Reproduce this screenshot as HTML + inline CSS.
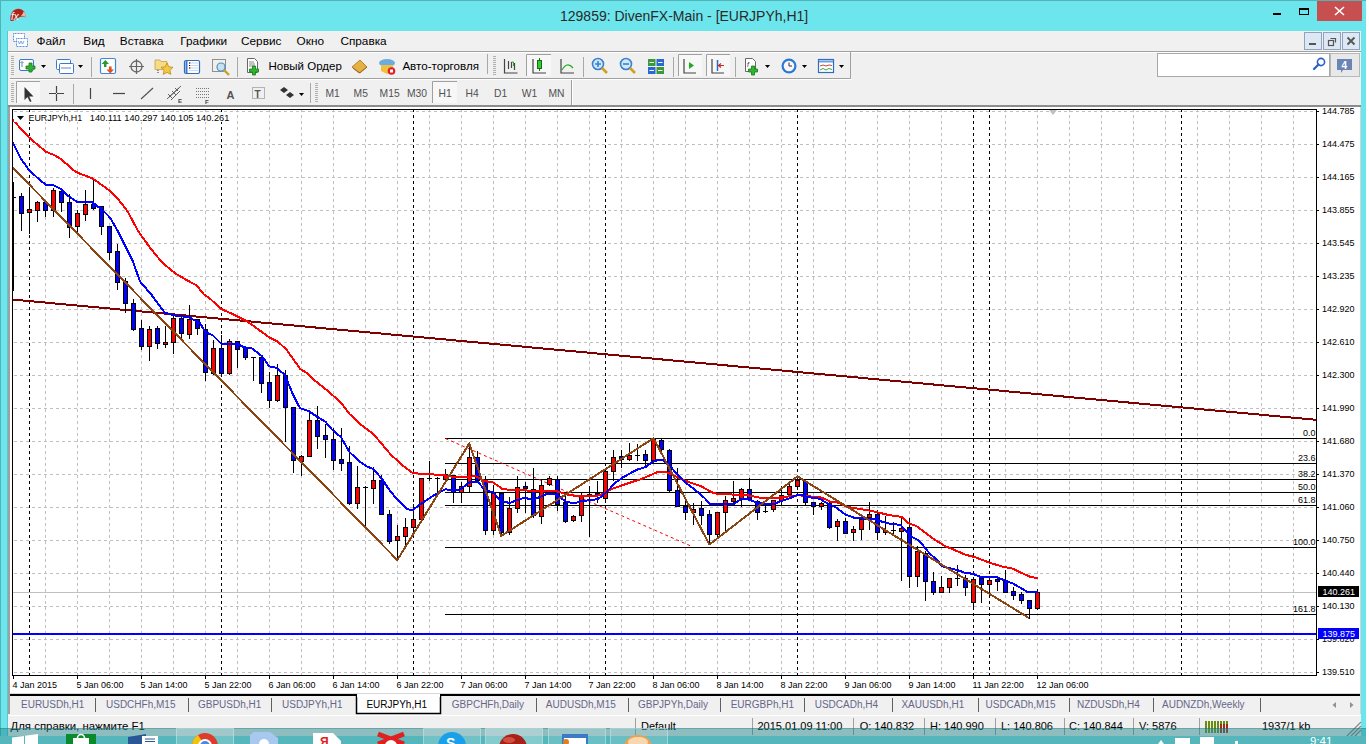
<!DOCTYPE html>
<html><head><meta charset="utf-8"><style>
*{margin:0;padding:0;box-sizing:border-box}
html,body{width:1369px;height:744px;overflow:hidden}
body{background:#6ce6ec;font-family:"Liberation Sans", sans-serif;position:relative}
svg{position:absolute;left:0;top:0}
svg text{font-family:"Liberation Sans", sans-serif}
</style></head><body>
<svg width="1369" height="744">
<rect x="0" y="0" width="1369" height="744" fill="#6ce6ec"/><rect x="1366" y="0" width="3" height="744" fill="#ffffff"/><rect x="0" y="0" width="1366" height="1" fill="#52b2b6"/><rect x="0" y="0" width="1" height="744" fill="#52b2b6"/><path d="M10.5 21C9.8 15 12 9.2 18 8.7C22.8 8.5 25.8 12 25.8 17.8C24 15.8 21 16.2 18.5 17.8C15.5 20 13 21.5 10.5 21Z" fill="#b02418"/><path d="M19 16.8C21.5 15.2 24 15.3 25.8 18C25.9 14.6 25.2 12.5 23.5 11.4C23 14 21.5 15.6 19 16.8Z" fill="#f2b4ac"/><text x="11" y="19.5" font-size="10" font-style="italic" fill="#fff">fx</text><text x="560" y="21" font-size="14" fill="#2a2a2a">129859: DivenFX-Main - [EURJPYh,H1]</text><rect x="1273" y="13" width="8" height="2" fill="#000"/><rect x="1299.5" y="8.5" width="9" height="6" fill="none" stroke="#000" stroke-width="1"/><rect x="1299" y="8" width="10" height="2" fill="#000"/><rect x="1317" y="1" width="45" height="20" fill="#c74f50"/><path d="M1335 7L1344 15M1344 7L1335 15" stroke="#fff" stroke-width="1.6"/><rect x="8" y="31" width="1353" height="705" fill="#f0f0f0"/><rect x="7" y="31" width="1" height="705" fill="#5cc8cc"/><rect x="8" y="51" width="1353" height="1" fill="#a0a0a0"/><rect x="8" y="52" width="1353" height="1" fill="#ffffff"/><rect x="13.5" y="33.5" width="11" height="8" fill="#fff" stroke="#5a8ee0" stroke-dasharray="1 0.5"/><rect x="16.5" y="38.5" width="11" height="8" fill="#fff" stroke="#5a8ee0" stroke-dasharray="1 0.5"/><path d="M18 41L19.5 44L21 41L22.5 44L24 41" stroke="#5a8ee0" fill="none" stroke-width="0.8"/><text x="36.5" y="44.8" font-size="11.8" fill="#000">Файл</text><text x="83.3" y="44.8" font-size="11.8" fill="#000">Вид</text><text x="119.8" y="44.8" font-size="11.8" fill="#000">Вставка</text><text x="180.3" y="44.8" font-size="11.8" fill="#000">Графики</text><text x="241" y="44.8" font-size="11.8" fill="#000">Сервис</text><text x="296.6" y="44.8" font-size="11.8" fill="#000">Окно</text><text x="340.4" y="44.8" font-size="11.8" fill="#000">Справка</text><rect x="1304.5" y="32.5" width="17" height="17" fill="#dde8f4" stroke="#8fa4bc"/><rect x="1323.5" y="32.5" width="17" height="17" fill="#dde8f4" stroke="#8fa4bc"/><rect x="1342.5" y="32.5" width="17" height="17" fill="#dde8f4" stroke="#8fa4bc"/><rect x="1309" y="43" width="7" height="2" fill="#555"/><path d="M1330.5 38.5h5v4" stroke="#555" fill="none" stroke-width="1.2"/><rect x="1328.5" y="40.5" width="5" height="5" fill="none" stroke="#555" stroke-width="1.2"/><path d="M1347.5 37.5L1354.5 44.5M1354.5 37.5L1347.5 44.5" stroke="#555" stroke-width="1.8"/><rect x="1157.5" y="53.5" width="172" height="23" fill="#fff" stroke="#a8a8a8"/><circle cx="1321" cy="62" r="3.6" fill="none" stroke="#2a5fc8" stroke-width="1.6"/><path d="M1318.5 64.5L1314 69" stroke="#2a5fc8" stroke-width="2.2" stroke-linecap="round"/><rect x="1330.5" y="53.5" width="29" height="23" fill="#e8e8e8" stroke="#b8b8b8"/><path d="M1337 59h15v11h-9l-2 3v-3h-4z" fill="#6a84b6"/><text x="1341.5" y="68.5" font-size="10" font-weight="bold" fill="#fff">4</text><path d="M10 78.5H850.5V52" stroke="#a0a0a0" fill="none"/><path d="M10 79.5H851.5" stroke="#fff" fill="none"/><path d="M571.5 80V105" stroke="#a0a0a0" fill="none"/><path d="M572.5 80V105" stroke="#fff" fill="none"/><rect x="8" y="105" width="1353" height="2" fill="#8c8c8c"/><path d="M11 56.5h3M11 58.5h3M11 60.5h3M11 62.5h3M11 64.5h3M11 66.5h3M11 68.5h3M11 70.5h3M11 72.5h3M11 74.5h3" stroke="#b0b0b0" stroke-width="1"/><path d="M11 83.5h3M11 85.5h3M11 87.5h3M11 89.5h3M11 91.5h3M11 93.5h3M11 95.5h3M11 97.5h3M11 99.5h3M11 101.5h3" stroke="#b0b0b0" stroke-width="1"/><path d="M493 56.5h3M493 58.5h3M493 60.5h3M493 62.5h3M493 64.5h3M493 66.5h3M493 68.5h3M493 70.5h3M493 72.5h3M493 74.5h3" stroke="#b0b0b0" stroke-width="1"/><path d="M315 83.5h3M315 85.5h3M315 87.5h3M315 89.5h3M315 91.5h3M315 93.5h3M315 95.5h3M315 97.5h3M315 99.5h3M315 101.5h3" stroke="#b0b0b0" stroke-width="1"/><path d="M91.5 57V77" stroke="#a8a8a8" stroke-width="1"/><path d="M237.5 57V77" stroke="#a8a8a8" stroke-width="1"/><path d="M487.5 54V74" stroke="#a8a8a8" stroke-width="1"/><path d="M583.5 57V77" stroke="#a8a8a8" stroke-width="1"/><path d="M673.5 57V77" stroke="#a8a8a8" stroke-width="1"/><path d="M735.5 57V77" stroke="#a8a8a8" stroke-width="1"/><path d="M73.5 84V104" stroke="#a8a8a8" stroke-width="1"/><path d="M310.5 83V103" stroke="#a8a8a8" stroke-width="1"/><rect x="16" y="81" width="24" height="22" fill="#f7f7f7"/><path d="M16.5 103V81.5H40" stroke="#a0a0a0" fill="none"/><rect x="432" y="81" width="25" height="22" fill="#f7f7f7"/><path d="M432.5 103V81.5H457" stroke="#a0a0a0" fill="none"/><rect x="526" y="54" width="25" height="22" fill="#f7f7f7"/><path d="M526.5 76V54.5H551" stroke="#a0a0a0" fill="none"/><rect x="678" y="54" width="24" height="22" fill="#f7f7f7"/><path d="M678.5 76V54.5H702" stroke="#a0a0a0" fill="none"/><rect x="706" y="54" width="24" height="22" fill="#f7f7f7"/><path d="M706.5 76V54.5H730" stroke="#a0a0a0" fill="none"/><rect x="10" y="107" width="1350" height="587" fill="#fff"/><path d="M14 111.5H1316M14 144.5H1316M14 177.5H1316M14 210.5H1316M14 243.5H1316M14 276.5H1316M14 309.5H1316M14 342.5H1316M14 375.5H1316M14 408.5H1316M14 441.5H1316M14 474.5H1316M14 507.5H1316M14 540.5H1316M14 573.5H1316M14 606.5H1316M14 639.5H1316M14 672.5H1316" stroke="#c0c0c0" stroke-width="1" stroke-dasharray="3 3" fill="none"/><path d="M45.5 109V675M77.5 109V675M109.5 109V675M141.5 109V675M173.5 109V675M205.5 109V675M237.5 109V675M269.5 109V675M301.5 109V675M333.5 109V675M365.5 109V675M397.5 109V675M429.5 109V675M461.5 109V675M493.5 109V675M525.5 109V675M557.5 109V675M589.5 109V675M621.5 109V675M653.5 109V675M685.5 109V675M717.5 109V675M749.5 109V675M781.5 109V675M813.5 109V675M845.5 109V675M877.5 109V675M909.5 109V675M941.5 109V675M973.5 109V675M1005.5 109V675M1037.5 109V675M1069.5 109V675M1101.5 109V675M1133.5 109V675M1165.5 109V675M1197.5 109V675M1229.5 109V675M1261.5 109V675M1293.5 109V675" stroke="#c0c0c0" stroke-width="1" stroke-dasharray="3 3" fill="none"/><path d="M29.5 109V675M221.5 109V675M413.5 109V675M605.5 109V675M797.5 109V675M973.5 109V675M989.5 109V675M1181.5 109V675" stroke="#000" stroke-width="1" stroke-dasharray="3 3" fill="none"/><line x1="12" y1="299.5" x2="1316" y2="419.8" stroke="#800000" stroke-width="2" shape-rendering="crispEdges"/><path d="M445 438.5H1316M445 463.5H1316M445 479.5H1316M445 492.5H1316M445 505.5H1316M445 547.5H1316M445 614.5H1316" stroke="#000" stroke-width="1" fill="none"/><line x1="445.5" y1="438.5" x2="692" y2="546.5" stroke="#ff0000" stroke-width="1" stroke-dasharray="3 3"/><path d="M13 592.5H1316" stroke="#c0c0c0" stroke-width="1"/><rect x="12" y="633" width="1304" height="2" fill="#0000ff"/><rect x="13" y="182" width="1" height="109" fill="#000"/><rect x="13" y="197" width="3" height="1" fill="#000"/><rect x="21" y="193" width="1" height="38" fill="#000"/><rect x="19" y="196" width="5" height="18" fill="#000"/><rect x="20" y="197" width="3" height="16" fill="#0000ff"/><rect x="29" y="188" width="1" height="46" fill="#000"/><rect x="27" y="209" width="5" height="4" fill="#000"/><rect x="28" y="210" width="3" height="2" fill="#ff0000"/><rect x="37" y="201" width="1" height="21" fill="#000"/><rect x="35" y="202" width="5" height="9" fill="#000"/><rect x="36" y="203" width="3" height="7" fill="#ff0000"/><rect x="45" y="200" width="1" height="17" fill="#000"/><rect x="43" y="202" width="5" height="9" fill="#000"/><rect x="44" y="203" width="3" height="7" fill="#0000ff"/><rect x="53" y="188" width="1" height="29" fill="#000"/><rect x="51" y="190" width="5" height="21" fill="#000"/><rect x="52" y="191" width="3" height="19" fill="#ff0000"/><rect x="61" y="190" width="1" height="22" fill="#000"/><rect x="59" y="191" width="5" height="12" fill="#000"/><rect x="60" y="192" width="3" height="10" fill="#0000ff"/><rect x="69" y="194" width="1" height="44" fill="#000"/><rect x="67" y="202" width="5" height="26" fill="#000"/><rect x="68" y="203" width="3" height="24" fill="#0000ff"/><rect x="77" y="210" width="1" height="24" fill="#000"/><rect x="75" y="213" width="5" height="14" fill="#000"/><rect x="76" y="214" width="3" height="12" fill="#ff0000"/><rect x="85" y="190" width="1" height="31" fill="#000"/><rect x="83" y="204" width="5" height="11" fill="#000"/><rect x="84" y="205" width="3" height="9" fill="#ff0000"/><rect x="93" y="180" width="1" height="30" fill="#000"/><rect x="91" y="204" width="5" height="5" fill="#000"/><rect x="92" y="205" width="3" height="3" fill="#0000ff"/><rect x="101" y="206" width="1" height="29" fill="#000"/><rect x="99" y="206" width="5" height="21" fill="#000"/><rect x="100" y="207" width="3" height="19" fill="#0000ff"/><rect x="109" y="226" width="1" height="34" fill="#000"/><rect x="107" y="226" width="5" height="27" fill="#000"/><rect x="108" y="227" width="3" height="25" fill="#0000ff"/><rect x="117" y="244" width="1" height="46" fill="#000"/><rect x="115" y="251" width="5" height="32" fill="#000"/><rect x="116" y="252" width="3" height="30" fill="#0000ff"/><rect x="125" y="278" width="1" height="35" fill="#000"/><rect x="123" y="281" width="5" height="23" fill="#000"/><rect x="124" y="282" width="3" height="21" fill="#0000ff"/><rect x="133" y="299" width="1" height="32" fill="#000"/><rect x="131" y="303" width="5" height="27" fill="#000"/><rect x="132" y="304" width="3" height="25" fill="#0000ff"/><rect x="141" y="320" width="1" height="30" fill="#000"/><rect x="139" y="328" width="5" height="19" fill="#000"/><rect x="140" y="329" width="3" height="17" fill="#0000ff"/><rect x="149" y="326" width="1" height="35" fill="#000"/><rect x="147" y="329" width="5" height="18" fill="#000"/><rect x="148" y="330" width="3" height="16" fill="#ff0000"/><rect x="157" y="326" width="1" height="23" fill="#000"/><rect x="155" y="328" width="5" height="16" fill="#000"/><rect x="156" y="329" width="3" height="14" fill="#0000ff"/><rect x="165" y="326" width="1" height="22" fill="#000"/><rect x="163" y="342" width="5" height="3" fill="#000"/><rect x="164" y="343" width="3" height="1" fill="#ff0000"/><rect x="173" y="316" width="1" height="38" fill="#000"/><rect x="171" y="318" width="5" height="25" fill="#000"/><rect x="172" y="319" width="3" height="23" fill="#ff0000"/><rect x="181" y="316" width="1" height="23" fill="#000"/><rect x="179" y="318" width="5" height="16" fill="#000"/><rect x="180" y="319" width="3" height="14" fill="#0000ff"/><rect x="189" y="305" width="1" height="34" fill="#000"/><rect x="187" y="319" width="5" height="16" fill="#000"/><rect x="188" y="320" width="3" height="14" fill="#ff0000"/><rect x="197" y="319" width="1" height="16" fill="#000"/><rect x="195" y="319" width="5" height="10" fill="#000"/><rect x="196" y="320" width="3" height="8" fill="#0000ff"/><rect x="205" y="324" width="1" height="57" fill="#000"/><rect x="203" y="329" width="5" height="44" fill="#000"/><rect x="204" y="330" width="3" height="42" fill="#0000ff"/><rect x="213" y="340" width="1" height="35" fill="#000"/><rect x="211" y="348" width="5" height="26" fill="#000"/><rect x="212" y="349" width="3" height="24" fill="#ff0000"/><rect x="221" y="335" width="1" height="42" fill="#000"/><rect x="219" y="348" width="5" height="26" fill="#000"/><rect x="220" y="349" width="3" height="24" fill="#0000ff"/><rect x="229" y="339" width="1" height="36" fill="#000"/><rect x="227" y="341" width="5" height="33" fill="#000"/><rect x="228" y="342" width="3" height="31" fill="#ff0000"/><rect x="237" y="341" width="1" height="27" fill="#000"/><rect x="235" y="341" width="5" height="9" fill="#000"/><rect x="236" y="342" width="3" height="7" fill="#0000ff"/><rect x="245" y="347" width="1" height="13" fill="#000"/><rect x="243" y="347" width="5" height="11" fill="#000"/><rect x="244" y="348" width="3" height="9" fill="#0000ff"/><rect x="253" y="357" width="1" height="24" fill="#000"/><rect x="251" y="357" width="5" height="1" fill="#000"/><rect x="261" y="357" width="1" height="36" fill="#000"/><rect x="259" y="357" width="5" height="27" fill="#000"/><rect x="260" y="358" width="3" height="25" fill="#0000ff"/><rect x="269" y="372" width="1" height="36" fill="#000"/><rect x="267" y="382" width="5" height="19" fill="#000"/><rect x="268" y="383" width="3" height="17" fill="#0000ff"/><rect x="277" y="364" width="1" height="38" fill="#000"/><rect x="275" y="375" width="5" height="26" fill="#000"/><rect x="276" y="376" width="3" height="24" fill="#ff0000"/><rect x="285" y="370" width="1" height="72" fill="#000"/><rect x="283" y="375" width="5" height="33" fill="#000"/><rect x="284" y="376" width="3" height="31" fill="#0000ff"/><rect x="293" y="407" width="1" height="66" fill="#000"/><rect x="291" y="407" width="5" height="54" fill="#000"/><rect x="292" y="408" width="3" height="52" fill="#0000ff"/><rect x="301" y="455" width="1" height="21" fill="#000"/><rect x="299" y="456" width="5" height="6" fill="#000"/><rect x="300" y="457" width="3" height="4" fill="#ff0000"/><rect x="309" y="411" width="1" height="46" fill="#000"/><rect x="307" y="420" width="5" height="37" fill="#000"/><rect x="308" y="421" width="3" height="35" fill="#ff0000"/><rect x="317" y="406" width="1" height="43" fill="#000"/><rect x="315" y="420" width="5" height="17" fill="#000"/><rect x="316" y="421" width="3" height="15" fill="#0000ff"/><rect x="325" y="424" width="1" height="34" fill="#000"/><rect x="323" y="435" width="5" height="5" fill="#000"/><rect x="324" y="436" width="3" height="3" fill="#0000ff"/><rect x="333" y="428" width="1" height="42" fill="#000"/><rect x="331" y="439" width="5" height="22" fill="#000"/><rect x="332" y="440" width="3" height="20" fill="#0000ff"/><rect x="341" y="428" width="1" height="43" fill="#000"/><rect x="339" y="459" width="5" height="5" fill="#000"/><rect x="340" y="460" width="3" height="3" fill="#0000ff"/><rect x="349" y="446" width="1" height="59" fill="#000"/><rect x="347" y="462" width="5" height="42" fill="#000"/><rect x="348" y="463" width="3" height="40" fill="#0000ff"/><rect x="357" y="466" width="1" height="43" fill="#000"/><rect x="355" y="487" width="5" height="17" fill="#000"/><rect x="356" y="488" width="3" height="15" fill="#ff0000"/><rect x="365" y="486" width="1" height="41" fill="#000"/><rect x="363" y="487" width="5" height="1" fill="#000"/><rect x="373" y="467" width="1" height="37" fill="#000"/><rect x="371" y="480" width="5" height="9" fill="#000"/><rect x="372" y="481" width="3" height="7" fill="#ff0000"/><rect x="381" y="475" width="1" height="40" fill="#000"/><rect x="379" y="480" width="5" height="35" fill="#000"/><rect x="380" y="481" width="3" height="33" fill="#0000ff"/><rect x="389" y="510" width="1" height="34" fill="#000"/><rect x="387" y="514" width="5" height="28" fill="#000"/><rect x="388" y="515" width="3" height="26" fill="#0000ff"/><rect x="397" y="525" width="1" height="36" fill="#000"/><rect x="395" y="536" width="5" height="5" fill="#000"/><rect x="396" y="537" width="3" height="3" fill="#ff0000"/><rect x="405" y="518" width="1" height="28" fill="#000"/><rect x="403" y="527" width="5" height="10" fill="#000"/><rect x="404" y="528" width="3" height="8" fill="#ff0000"/><rect x="413" y="504" width="1" height="28" fill="#000"/><rect x="411" y="519" width="5" height="9" fill="#000"/><rect x="412" y="520" width="3" height="7" fill="#ff0000"/><rect x="421" y="478" width="1" height="42" fill="#000"/><rect x="419" y="478" width="5" height="42" fill="#000"/><rect x="420" y="479" width="3" height="40" fill="#ff0000"/><rect x="429" y="461" width="1" height="20" fill="#000"/><rect x="427" y="478" width="5" height="1" fill="#000"/><rect x="437" y="477" width="1" height="17" fill="#000"/><rect x="435" y="478" width="5" height="1" fill="#000"/><rect x="445" y="469" width="1" height="11" fill="#000"/><rect x="443" y="474" width="5" height="6" fill="#000"/><rect x="444" y="475" width="3" height="4" fill="#ff0000"/><rect x="453" y="475" width="1" height="28" fill="#000"/><rect x="451" y="475" width="5" height="18" fill="#000"/><rect x="452" y="476" width="3" height="16" fill="#0000ff"/><rect x="461" y="482" width="1" height="21" fill="#000"/><rect x="459" y="486" width="5" height="7" fill="#000"/><rect x="460" y="487" width="3" height="5" fill="#ff0000"/><rect x="469" y="445" width="1" height="48" fill="#000"/><rect x="467" y="457" width="5" height="30" fill="#000"/><rect x="468" y="458" width="3" height="28" fill="#ff0000"/><rect x="477" y="451" width="1" height="30" fill="#000"/><rect x="475" y="457" width="5" height="24" fill="#000"/><rect x="476" y="458" width="3" height="22" fill="#0000ff"/><rect x="485" y="476" width="1" height="59" fill="#000"/><rect x="483" y="480" width="5" height="51" fill="#000"/><rect x="484" y="481" width="3" height="49" fill="#0000ff"/><rect x="493" y="485" width="1" height="50" fill="#000"/><rect x="491" y="493" width="5" height="38" fill="#000"/><rect x="492" y="494" width="3" height="36" fill="#ff0000"/><rect x="501" y="493" width="1" height="41" fill="#000"/><rect x="499" y="493" width="5" height="40" fill="#000"/><rect x="500" y="494" width="3" height="38" fill="#0000ff"/><rect x="509" y="497" width="1" height="38" fill="#000"/><rect x="507" y="508" width="5" height="25" fill="#000"/><rect x="508" y="509" width="3" height="23" fill="#ff0000"/><rect x="517" y="476" width="1" height="37" fill="#000"/><rect x="515" y="487" width="5" height="22" fill="#000"/><rect x="516" y="488" width="3" height="20" fill="#ff0000"/><rect x="525" y="482" width="1" height="31" fill="#000"/><rect x="523" y="486" width="5" height="3" fill="#000"/><rect x="524" y="487" width="3" height="1" fill="#0000ff"/><rect x="533" y="468" width="1" height="50" fill="#000"/><rect x="531" y="489" width="5" height="27" fill="#000"/><rect x="532" y="490" width="3" height="25" fill="#0000ff"/><rect x="541" y="479" width="1" height="45" fill="#000"/><rect x="539" y="485" width="5" height="32" fill="#000"/><rect x="540" y="486" width="3" height="30" fill="#ff0000"/><rect x="549" y="476" width="1" height="10" fill="#000"/><rect x="547" y="478" width="5" height="7" fill="#000"/><rect x="548" y="479" width="3" height="5" fill="#ff0000"/><rect x="557" y="476" width="1" height="35" fill="#000"/><rect x="555" y="479" width="5" height="26" fill="#000"/><rect x="556" y="480" width="3" height="24" fill="#0000ff"/><rect x="565" y="495" width="1" height="28" fill="#000"/><rect x="563" y="502" width="5" height="20" fill="#000"/><rect x="564" y="503" width="3" height="18" fill="#0000ff"/><rect x="573" y="515" width="1" height="7" fill="#000"/><rect x="571" y="516" width="5" height="5" fill="#000"/><rect x="572" y="517" width="3" height="3" fill="#ff0000"/><rect x="581" y="493" width="1" height="29" fill="#000"/><rect x="579" y="495" width="5" height="21" fill="#000"/><rect x="580" y="496" width="3" height="19" fill="#ff0000"/><rect x="589" y="486" width="1" height="51" fill="#000"/><rect x="587" y="494" width="5" height="1" fill="#000"/><rect x="597" y="481" width="1" height="22" fill="#000"/><rect x="595" y="493" width="5" height="3" fill="#000"/><rect x="596" y="494" width="3" height="1" fill="#0000ff"/><rect x="605" y="471" width="1" height="32" fill="#000"/><rect x="603" y="471" width="5" height="28" fill="#000"/><rect x="604" y="472" width="3" height="26" fill="#ff0000"/><rect x="613" y="450" width="1" height="31" fill="#000"/><rect x="611" y="457" width="5" height="15" fill="#000"/><rect x="612" y="458" width="3" height="13" fill="#ff0000"/><rect x="621" y="450" width="1" height="18" fill="#000"/><rect x="619" y="456" width="5" height="4" fill="#000"/><rect x="620" y="457" width="3" height="2" fill="#0000ff"/><rect x="629" y="443" width="1" height="18" fill="#000"/><rect x="627" y="455" width="5" height="5" fill="#000"/><rect x="628" y="456" width="3" height="3" fill="#ff0000"/><rect x="637" y="444" width="1" height="17" fill="#000"/><rect x="635" y="455" width="5" height="1" fill="#000"/><rect x="645" y="450" width="1" height="16" fill="#000"/><rect x="643" y="454" width="5" height="7" fill="#000"/><rect x="644" y="455" width="3" height="5" fill="#0000ff"/><rect x="653" y="437" width="1" height="24" fill="#000"/><rect x="651" y="438" width="5" height="23" fill="#000"/><rect x="652" y="439" width="3" height="21" fill="#ff0000"/><rect x="661" y="439" width="1" height="12" fill="#000"/><rect x="659" y="440" width="5" height="10" fill="#000"/><rect x="660" y="441" width="3" height="8" fill="#0000ff"/><rect x="669" y="449" width="1" height="44" fill="#000"/><rect x="667" y="450" width="5" height="41" fill="#000"/><rect x="668" y="451" width="3" height="39" fill="#0000ff"/><rect x="677" y="468" width="1" height="39" fill="#000"/><rect x="675" y="490" width="5" height="17" fill="#000"/><rect x="676" y="491" width="3" height="15" fill="#0000ff"/><rect x="685" y="501" width="1" height="19" fill="#000"/><rect x="683" y="506" width="5" height="7" fill="#000"/><rect x="684" y="507" width="3" height="5" fill="#0000ff"/><rect x="693" y="503" width="1" height="22" fill="#000"/><rect x="691" y="509" width="5" height="4" fill="#000"/><rect x="692" y="510" width="3" height="2" fill="#ff0000"/><rect x="701" y="501" width="1" height="24" fill="#000"/><rect x="699" y="508" width="5" height="8" fill="#000"/><rect x="700" y="509" width="3" height="6" fill="#0000ff"/><rect x="709" y="510" width="1" height="35" fill="#000"/><rect x="707" y="514" width="5" height="21" fill="#000"/><rect x="708" y="515" width="3" height="19" fill="#0000ff"/><rect x="717" y="512" width="1" height="27" fill="#000"/><rect x="715" y="512" width="5" height="23" fill="#000"/><rect x="716" y="513" width="3" height="21" fill="#ff0000"/><rect x="725" y="496" width="1" height="36" fill="#000"/><rect x="723" y="500" width="5" height="13" fill="#000"/><rect x="724" y="501" width="3" height="11" fill="#ff0000"/><rect x="733" y="481" width="1" height="23" fill="#000"/><rect x="731" y="498" width="5" height="4" fill="#000"/><rect x="732" y="499" width="3" height="2" fill="#ff0000"/><rect x="741" y="488" width="1" height="19" fill="#000"/><rect x="739" y="489" width="5" height="10" fill="#000"/><rect x="740" y="490" width="3" height="8" fill="#ff0000"/><rect x="749" y="478" width="1" height="23" fill="#000"/><rect x="747" y="489" width="5" height="11" fill="#000"/><rect x="748" y="490" width="3" height="9" fill="#0000ff"/><rect x="757" y="500" width="1" height="20" fill="#000"/><rect x="755" y="501" width="5" height="12" fill="#000"/><rect x="756" y="502" width="3" height="10" fill="#0000ff"/><rect x="765" y="503" width="1" height="10" fill="#000"/><rect x="763" y="511" width="5" height="1" fill="#000"/><rect x="773" y="500" width="1" height="12" fill="#000"/><rect x="771" y="500" width="5" height="10" fill="#000"/><rect x="772" y="501" width="3" height="8" fill="#ff0000"/><rect x="781" y="486" width="1" height="20" fill="#000"/><rect x="779" y="495" width="5" height="6" fill="#000"/><rect x="780" y="496" width="3" height="4" fill="#ff0000"/><rect x="789" y="482" width="1" height="14" fill="#000"/><rect x="787" y="486" width="5" height="9" fill="#000"/><rect x="788" y="487" width="3" height="7" fill="#ff0000"/><rect x="797" y="476" width="1" height="13" fill="#000"/><rect x="795" y="480" width="5" height="7" fill="#000"/><rect x="796" y="481" width="3" height="5" fill="#ff0000"/><rect x="805" y="480" width="1" height="26" fill="#000"/><rect x="803" y="481" width="5" height="22" fill="#000"/><rect x="804" y="482" width="3" height="20" fill="#0000ff"/><rect x="813" y="502" width="1" height="13" fill="#000"/><rect x="811" y="502" width="5" height="5" fill="#000"/><rect x="812" y="503" width="3" height="3" fill="#0000ff"/><rect x="821" y="502" width="1" height="8" fill="#000"/><rect x="819" y="503" width="5" height="4" fill="#000"/><rect x="820" y="504" width="3" height="2" fill="#ff0000"/><rect x="829" y="502" width="1" height="27" fill="#000"/><rect x="827" y="503" width="5" height="25" fill="#000"/><rect x="828" y="504" width="3" height="23" fill="#0000ff"/><rect x="837" y="519" width="1" height="22" fill="#000"/><rect x="835" y="521" width="5" height="6" fill="#000"/><rect x="836" y="522" width="3" height="4" fill="#ff0000"/><rect x="845" y="518" width="1" height="16" fill="#000"/><rect x="843" y="521" width="5" height="13" fill="#000"/><rect x="844" y="522" width="3" height="11" fill="#0000ff"/><rect x="853" y="526" width="1" height="15" fill="#000"/><rect x="851" y="529" width="5" height="4" fill="#000"/><rect x="852" y="530" width="3" height="2" fill="#ff0000"/><rect x="861" y="517" width="1" height="23" fill="#000"/><rect x="859" y="519" width="5" height="11" fill="#000"/><rect x="860" y="520" width="3" height="9" fill="#ff0000"/><rect x="869" y="502" width="1" height="28" fill="#000"/><rect x="867" y="514" width="5" height="4" fill="#000"/><rect x="868" y="515" width="3" height="2" fill="#ff0000"/><rect x="877" y="510" width="1" height="30" fill="#000"/><rect x="875" y="514" width="5" height="19" fill="#000"/><rect x="876" y="515" width="3" height="17" fill="#0000ff"/><rect x="885" y="516" width="1" height="19" fill="#000"/><rect x="883" y="530" width="5" height="3" fill="#000"/><rect x="884" y="531" width="3" height="1" fill="#ff0000"/><rect x="893" y="522" width="1" height="13" fill="#000"/><rect x="891" y="530" width="5" height="1" fill="#000"/><rect x="901" y="518" width="1" height="63" fill="#000"/><rect x="899" y="528" width="5" height="4" fill="#000"/><rect x="900" y="529" width="3" height="2" fill="#ff0000"/><rect x="909" y="518" width="1" height="70" fill="#000"/><rect x="907" y="527" width="5" height="50" fill="#000"/><rect x="908" y="528" width="3" height="48" fill="#0000ff"/><rect x="917" y="546" width="1" height="41" fill="#000"/><rect x="915" y="551" width="5" height="26" fill="#000"/><rect x="916" y="552" width="3" height="24" fill="#ff0000"/><rect x="925" y="551" width="1" height="50" fill="#000"/><rect x="923" y="553" width="5" height="29" fill="#000"/><rect x="924" y="554" width="3" height="27" fill="#0000ff"/><rect x="933" y="572" width="1" height="23" fill="#000"/><rect x="931" y="581" width="5" height="12" fill="#000"/><rect x="932" y="582" width="3" height="10" fill="#0000ff"/><rect x="941" y="576" width="1" height="17" fill="#000"/><rect x="939" y="587" width="5" height="6" fill="#000"/><rect x="940" y="588" width="3" height="4" fill="#ff0000"/><rect x="949" y="578" width="1" height="15" fill="#000"/><rect x="947" y="578" width="5" height="10" fill="#000"/><rect x="948" y="579" width="3" height="8" fill="#ff0000"/><rect x="957" y="565" width="1" height="21" fill="#000"/><rect x="955" y="578" width="5" height="1" fill="#000"/><rect x="965" y="575" width="1" height="21" fill="#000"/><rect x="963" y="578" width="5" height="10" fill="#000"/><rect x="964" y="579" width="3" height="8" fill="#0000ff"/><rect x="973" y="578" width="1" height="32" fill="#000"/><rect x="971" y="579" width="5" height="24" fill="#000"/><rect x="972" y="580" width="3" height="22" fill="#ff0000"/><rect x="981" y="578" width="1" height="25" fill="#000"/><rect x="979" y="578" width="5" height="7" fill="#000"/><rect x="980" y="579" width="3" height="5" fill="#0000ff"/><rect x="989" y="578" width="1" height="17" fill="#000"/><rect x="987" y="580" width="5" height="5" fill="#000"/><rect x="988" y="581" width="3" height="3" fill="#ff0000"/><rect x="997" y="578" width="1" height="13" fill="#000"/><rect x="995" y="579" width="5" height="3" fill="#000"/><rect x="996" y="580" width="3" height="1" fill="#0000ff"/><rect x="1005" y="570" width="1" height="23" fill="#000"/><rect x="1003" y="581" width="5" height="12" fill="#000"/><rect x="1004" y="582" width="3" height="10" fill="#0000ff"/><rect x="1013" y="587" width="1" height="13" fill="#000"/><rect x="1011" y="591" width="5" height="5" fill="#000"/><rect x="1012" y="592" width="3" height="3" fill="#0000ff"/><rect x="1021" y="592" width="1" height="12" fill="#000"/><rect x="1019" y="594" width="5" height="7" fill="#000"/><rect x="1020" y="595" width="3" height="5" fill="#0000ff"/><rect x="1029" y="600" width="1" height="19" fill="#000"/><rect x="1027" y="600" width="5" height="9" fill="#000"/><rect x="1028" y="601" width="3" height="7" fill="#0000ff"/><rect x="1037" y="589" width="1" height="21" fill="#000"/><rect x="1035" y="592" width="5" height="17" fill="#000"/><rect x="1036" y="593" width="3" height="15" fill="#ff0000"/><polyline points="12.5,119.5 29.0,137.5 45.9,151.7 54.4,155.2 61.4,159.4 74.1,170.7 79.8,173.6 92.5,178.5 99.6,183.4 109.5,190.5 118.0,199.0 127.8,211.7 137.5,230.0 141.3,235.6 148.8,246.0 155.4,254.5 162.0,262.0 167.6,267.1 175.2,273.3 184.6,278.9 191.2,282.6 196.8,285.5 203.4,294.0 209.0,297.7 221.2,309.0 231.0,313.3 246.6,321.0 256.5,328.1 269.2,337.3 277.7,341.6 286.2,349.3 300.3,369.0 307.3,373.3 314.1,380.0 328.2,391.3 341.0,402.6 349.4,413.9 360.7,424.5 372.0,433.0 379.1,440.7 390.4,454.2 401.7,464.7 413.0,473.2 429.4,474.2 445.0,475.3 453.4,477.0 464.7,476.7 476.0,476.4 484.5,481.0 493.0,482.4 502.3,488.9 510.3,490.0 526.5,490.5 542.6,491.0 557.0,491.3 566.8,494.5 574.8,495.8 595.8,496.1 603.9,493.7 609.1,490.0 617.1,487.1 628.6,483.1 641.1,479.1 649.1,475.7 658.3,471.7 665.1,471.7 670.9,474.0 680.0,478.6 690.3,482.6 700.6,486.0 709.7,491.1 714.3,493.4 724.9,494.1 738.6,494.9 750.0,495.6 761.4,498.1 774.0,498.1 784.3,497.0 792.3,495.9 799.1,495.3 809.4,496.4 819.7,497.0 825.4,499.3 830.0,501.6 836.4,502.0 847.9,507.1 859.3,508.9 869.6,510.6 879.9,512.9 889.0,515.1 901.6,516.9 908.4,523.1 916.4,526.0 925.6,532.9 934.7,539.7 945.0,546.0 949.9,548.0 965.9,554.9 975.0,557.1 989.9,562.9 1003.6,566.9 1012.7,568.6 1020.7,572.6 1029.9,576.6 1037.9,578.3" stroke="#ff0000" stroke-width="2" fill="none" stroke-linejoin="round" shape-rendering="crispEdges"/><polyline points="12.5,142.0 20.5,158.0 29.0,170.0 37.4,177.8 45.9,184.9 53.0,184.9 61.4,189.1 68.5,196.2 77.0,201.8 92.5,202.5 102.5,210.0 110.0,217.6 117.6,230.7 125.1,245.8 132.6,260.8 140.1,281.5 151.4,294.7 164.6,312.5 174.0,315.4 189.0,317.2 200.0,323.2 205.6,332.4 212.7,335.2 221.2,343.7 236.7,343.7 243.8,347.2 252.3,348.6 262.1,356.4 269.2,366.3 276.3,367.7 284.7,374.7 293.2,395.0 300.0,408.2 308.5,411.0 317.0,416.7 325.4,421.7 332.5,430.1 341.0,437.2 349.4,452.0 359.3,461.2 366.4,466.2 373.4,469.0 381.9,478.9 388.5,488.7 397.0,499.3 406.8,509.2 412.5,510.0 422.4,502.9 436.5,493.7 445.0,489.4 459.1,490.1 470.4,481.7 477.5,481.7 485.9,490.8 493.0,492.0 500.0,500.7 509.4,503.0 516.9,500.3 524.4,497.6 532.0,499.8 538.4,497.6 547.0,493.9 554.5,494.2 559.9,497.1 565.3,501.4 573.9,503.5 581.4,500.9 590.0,500.3 597.5,499.2 602.9,495.5 610.0,488.5 614.9,483.1 622.9,477.4 630.9,472.9 637.7,469.4 645.7,467.1 651.4,462.6 657.1,460.3 662.9,460.3 668.6,464.3 675.4,472.3 683.4,480.9 691.4,487.1 699.4,493.4 705.1,498.6 709.7,503.7 732.9,504.4 740.9,499.3 747.7,499.3 755.7,502.1 764.9,503.9 774.0,503.9 783.1,500.4 790.0,498.1 796.9,495.0 801.4,495.0 807.1,497.0 819.7,498.7 824.3,501.6 830.0,504.4 835.3,507.1 845.6,514.6 854.7,518.0 863.9,518.6 873.0,518.6 881.0,521.4 890.1,523.7 900.4,524.9 905.0,530.0 911.9,536.9 918.7,540.3 924.4,547.1 930.1,554.0 937.0,559.7 941.9,566.3 948.7,568.0 957.9,570.3 965.9,573.1 972.7,573.7 979.6,576.6 996.7,577.1 1003.6,580.0 1012.7,583.4 1020.7,588.0 1027.6,592.0 1037.9,592.0" stroke="#0000ff" stroke-width="2" fill="none" stroke-linejoin="round" shape-rendering="crispEdges"/><polyline points="12.5,167.5 397.3,560.0 469.3,443.5 501.2,536.0 653.6,438.2 709.4,544.5 797.5,476.4 1029.0,618.0" stroke="#8b4513" stroke-width="2" fill="none" stroke-linejoin="round" shape-rendering="crispEdges"/><rect x="10" y="107" width="2" height="587" fill="#fff"/><rect x="14" y="113" width="217" height="9" fill="#fff"/><rect x="12.5" y="109.5" width="1304" height="566" stroke="#000" stroke-width="1" fill="none"/><path d="M1049 110L1057 110L1053 115Z" fill="#c0c0c0"/><text x="1315.5" y="435.5" font-size="9.8" fill="#000" text-anchor="end" textLength="12.51" lengthAdjust="spacingAndGlyphs">0.0</text><text x="1315.5" y="460.5" font-size="9.8" fill="#000" text-anchor="end" textLength="17.52" lengthAdjust="spacingAndGlyphs">23.6</text><text x="1315.5" y="476.5" font-size="9.8" fill="#000" text-anchor="end" textLength="17.52" lengthAdjust="spacingAndGlyphs">38.2</text><text x="1315.5" y="489.5" font-size="9.8" fill="#000" text-anchor="end" textLength="17.52" lengthAdjust="spacingAndGlyphs">50.0</text><text x="1315.5" y="502.5" font-size="9.8" fill="#000" text-anchor="end" textLength="17.52" lengthAdjust="spacingAndGlyphs">61.8</text><text x="1315.5" y="544.5" font-size="9.8" fill="#000" text-anchor="end" textLength="22.52" lengthAdjust="spacingAndGlyphs">100.0</text><text x="1315.5" y="611.5" font-size="9.8" fill="#000" text-anchor="end" textLength="22.52" lengthAdjust="spacingAndGlyphs">161.8</text><text x="1322" y="114" font-size="9.8" fill="#000" textLength="32.53" lengthAdjust="spacingAndGlyphs">144.785</text><text x="1322" y="147" font-size="9.8" fill="#000" textLength="32.53" lengthAdjust="spacingAndGlyphs">144.475</text><text x="1322" y="180" font-size="9.8" fill="#000" textLength="32.53" lengthAdjust="spacingAndGlyphs">144.165</text><text x="1322" y="213" font-size="9.8" fill="#000" textLength="32.53" lengthAdjust="spacingAndGlyphs">143.855</text><text x="1322" y="246" font-size="9.8" fill="#000" textLength="32.53" lengthAdjust="spacingAndGlyphs">143.545</text><text x="1322" y="279" font-size="9.8" fill="#000" textLength="32.53" lengthAdjust="spacingAndGlyphs">143.235</text><text x="1322" y="312" font-size="9.8" fill="#000" textLength="32.53" lengthAdjust="spacingAndGlyphs">142.920</text><text x="1322" y="345" font-size="9.8" fill="#000" textLength="32.53" lengthAdjust="spacingAndGlyphs">142.610</text><text x="1322" y="378" font-size="9.8" fill="#000" textLength="32.53" lengthAdjust="spacingAndGlyphs">142.300</text><text x="1322" y="411" font-size="9.8" fill="#000" textLength="32.53" lengthAdjust="spacingAndGlyphs">141.990</text><text x="1322" y="444" font-size="9.8" fill="#000" textLength="32.53" lengthAdjust="spacingAndGlyphs">141.680</text><text x="1322" y="477" font-size="9.8" fill="#000" textLength="32.53" lengthAdjust="spacingAndGlyphs">141.370</text><text x="1322" y="510" font-size="9.8" fill="#000" textLength="32.53" lengthAdjust="spacingAndGlyphs">141.060</text><text x="1322" y="543" font-size="9.8" fill="#000" textLength="32.53" lengthAdjust="spacingAndGlyphs">140.750</text><text x="1322" y="576" font-size="9.8" fill="#000" textLength="32.53" lengthAdjust="spacingAndGlyphs">140.440</text><text x="1322" y="609" font-size="9.8" fill="#000" textLength="32.53" lengthAdjust="spacingAndGlyphs">140.130</text><text x="1322" y="642" font-size="9.8" fill="#000" textLength="32.53" lengthAdjust="spacingAndGlyphs">139.820</text><text x="1322" y="675" font-size="9.8" fill="#000" textLength="32.53" lengthAdjust="spacingAndGlyphs">139.510</text><path d="M1317 111.5H1319M1317 144.5H1319M1317 177.5H1319M1317 210.5H1319M1317 243.5H1319M1317 276.5H1319M1317 309.5H1319M1317 342.5H1319M1317 375.5H1319M1317 408.5H1319M1317 441.5H1319M1317 474.5H1319M1317 507.5H1319M1317 540.5H1319M1317 573.5H1319M1317 606.5H1319M1317 639.5H1319M1317 672.5H1319" stroke="#000" stroke-width="1"/><rect x="1318" y="586" width="41" height="11" fill="#000"/><text x="1322.5" y="595" font-size="9.8" fill="#fff" textLength="32.53" lengthAdjust="spacingAndGlyphs">140.261</text><rect x="1318" y="628" width="41" height="11" fill="#0000ff"/><text x="1322.5" y="637" font-size="9.8" fill="#fff" textLength="32.53" lengthAdjust="spacingAndGlyphs">139.875</text><text x="12.5" y="688" font-size="9.8" fill="#000" textLength="44.54" lengthAdjust="spacingAndGlyphs">4 Jan 2015</text><text x="76.5" y="688" font-size="9.8" fill="#000" textLength="47.04" lengthAdjust="spacingAndGlyphs">5 Jan 06:00</text><text x="140.5" y="688" font-size="9.8" fill="#000" textLength="47.04" lengthAdjust="spacingAndGlyphs">5 Jan 14:00</text><text x="204.5" y="688" font-size="9.8" fill="#000" textLength="47.04" lengthAdjust="spacingAndGlyphs">5 Jan 22:00</text><text x="268.5" y="688" font-size="9.8" fill="#000" textLength="47.04" lengthAdjust="spacingAndGlyphs">6 Jan 06:00</text><text x="332.5" y="688" font-size="9.8" fill="#000" textLength="47.04" lengthAdjust="spacingAndGlyphs">6 Jan 14:00</text><text x="396.5" y="688" font-size="9.8" fill="#000" textLength="47.04" lengthAdjust="spacingAndGlyphs">6 Jan 22:00</text><text x="460.5" y="688" font-size="9.8" fill="#000" textLength="47.04" lengthAdjust="spacingAndGlyphs">7 Jan 06:00</text><text x="524.5" y="688" font-size="9.8" fill="#000" textLength="47.04" lengthAdjust="spacingAndGlyphs">7 Jan 14:00</text><text x="588.5" y="688" font-size="9.8" fill="#000" textLength="47.04" lengthAdjust="spacingAndGlyphs">7 Jan 22:00</text><text x="652.5" y="688" font-size="9.8" fill="#000" textLength="47.04" lengthAdjust="spacingAndGlyphs">8 Jan 06:00</text><text x="716.5" y="688" font-size="9.8" fill="#000" textLength="47.04" lengthAdjust="spacingAndGlyphs">8 Jan 14:00</text><text x="780.5" y="688" font-size="9.8" fill="#000" textLength="47.04" lengthAdjust="spacingAndGlyphs">8 Jan 22:00</text><text x="844.5" y="688" font-size="9.8" fill="#000" textLength="47.04" lengthAdjust="spacingAndGlyphs">9 Jan 06:00</text><text x="908.5" y="688" font-size="9.8" fill="#000" textLength="47.04" lengthAdjust="spacingAndGlyphs">9 Jan 14:00</text><text x="972.5" y="688" font-size="9.8" fill="#000" textLength="51.38" lengthAdjust="spacingAndGlyphs">11 Jan 22:00</text><text x="1036.5" y="688" font-size="9.8" fill="#000" textLength="52.04" lengthAdjust="spacingAndGlyphs">12 Jan 06:00</text><path d="M13.5 676V679M77.5 676V679M141.5 676V679M205.5 676V679M269.5 676V679M333.5 676V679M397.5 676V679M461.5 676V679M525.5 676V679M589.5 676V679M653.5 676V679M717.5 676V679M781.5 676V679M845.5 676V679M909.5 676V679M973.5 676V679M1037.5 676V679" stroke="#000" stroke-width="1"/><path d="M17 116H24L20.5 120Z" fill="#000"/><text x="28.5" y="121" font-size="9.8" fill="#000" textLength="53.70" lengthAdjust="spacingAndGlyphs">EURJPYh,H1</text><text x="89.8" y="121" font-size="9.8" fill="#000" textLength="139.50" lengthAdjust="spacingAndGlyphs">140.111 140.297 140.105 140.261</text><g transform="translate(0,1)"><rect x="19.5" y="58.5" width="14" height="11" rx="1.5" fill="#fff" stroke="#3a78c8"/><path d="M22 61v5M20.5 62l1.5-1.5 1.5 1.5" stroke="#6a8ab0" fill="none"/><path d="M29 62h3v3h3v3h-3v3h-3v-3h-3v-3h3z" fill="#2fb52f" stroke="#1a7a1a" stroke-width="0.8"/><path d="M41 64h5l-2.5 3z" fill="#000"/><rect x="56.5" y="58.5" width="14" height="10" rx="1" fill="#fff" stroke="#3a78c8"/><rect x="59.5" y="62.5" width="14" height="10" rx="1" fill="#fff" stroke="#3a78c8"/><path d="M61 67h10" stroke="#6a8ab0"/><path d="M78 64h5l-2.5 3z" fill="#000"/><rect x="100.5" y="57.5" width="15" height="15" rx="1.5" fill="#fff" stroke="#3a88d8" stroke-width="1.2"/><path d="M104 66h2.5v-3h2.5l-3.7-4-3.7 4h2.4z" fill="#2a9a2a"/><path d="M109 65.5h2.6v3h2.5l-3.8 4-3.8-4h2.5z" fill="#e05020"/><circle cx="136.5" cy="65.5" r="5.5" fill="none" stroke="#666" stroke-width="1.3"/><path d="M136.5 58v15M129 65.5h15" stroke="#666" stroke-width="1.2"/><path d="M155 59h5l1 1.5h6v8h-12z" fill="#f6dc88" stroke="#c8a040" stroke-width="0.8"/><path d="M158 69v4" stroke="#333" stroke-dasharray="1 1"/><path d="M167 62l1.8 3.8 4.2.5-3 2.9.8 4.2-3.8-2-3.8 2 .8-4.2-3-2.9 4.2-.5z" fill="#f5c842" stroke="#b88010" stroke-width="0.7"/><rect x="184.5" y="59.5" width="15" height="13" rx="1.5" fill="#fff" stroke="#2e6cc0" stroke-width="1.2"/><path d="M186.5 60v12" stroke="#3a7ad0" stroke-width="2"/><path d="M189 62h9M189 64.5h9M189 67h9M189 69.5h9" stroke="#b8cce8" stroke-width="0.8"/><path d="M189 62h1M189 64.5h1M189 67h1" stroke="#000"/><path d="M189.5 62h1M189.5 67h1" stroke="#e02020"/><rect x="212.5" y="58.5" width="13" height="12" fill="#f0f0e8" stroke="#909090"/><circle cx="221" cy="66" r="4" fill="#c8e0f0" stroke="#4a90c8" stroke-width="1.2"/><path d="M224 69l5 5" stroke="#c8a030" stroke-width="2.4"/><path d="M247.5 57.5h7l3 3v11h-10z" fill="#fff" stroke="#666"/><path d="M249 61h5M249 63h6M249 65h6" stroke="#888"/><path d="M252.5 65h3v3h3v3h-3v3h-3v-3h-3v-3h3z" fill="#2fb52f" stroke="#1a7a1a" stroke-width="0.8"/><text x="268.5" y="69" font-size="11.5" fill="#000">Новый Ордер</text><path d="M352 66l8-7 7 7-8 6z" fill="#e8b040" stroke="#a07020" stroke-width="0.8"/><path d="M353 67l7 5 7-6" stroke="#8a5a10" fill="none" stroke-width="0.8"/><ellipse cx="387" cy="62" rx="8" ry="4" fill="#6aaee0"/><path d="M381 64h12v6l-6 3-6-3z" fill="#f0c040"/><circle cx="391.5" cy="70" r="3.8" fill="#e02020"/><rect x="390" y="68.5" width="3" height="3" fill="#fff"/><text x="402.4" y="69" font-size="11.6" fill="#000">Авто-торговля</text><path d="M504.5 58v14h13M508.5 60v8M511.5 61v6M514.5 62v7" stroke="#444" fill="none" stroke-width="1.2"/><path d="M511.5 61h2v4" stroke="#2a2" fill="none"/><path d="M533 58v14h13" stroke="#444" fill="none" stroke-width="1.2"/><rect x="537.5" y="59.5" width="4" height="8" fill="#3c3" stroke="#1a6a1a"/><path d="M539.5 57v2M539.5 68v2" stroke="#1a6a1a"/><path d="M561 58v14h13" stroke="#444" fill="none" stroke-width="1.2"/><path d="M562 69q5-9 11-2" stroke="#2a2" fill="none" stroke-width="1.2"/><circle cx="598" cy="63" r="5.5" fill="#d0e8f8" stroke="#3a80d0" stroke-width="1.6"/><path d="M595 63h6M598 60v6" stroke="#3a80d0" stroke-width="1.6"/><path d="M602 67l5 5" stroke="#d0a020" stroke-width="2.6"/><circle cx="626" cy="63" r="5.5" fill="#d0e8f8" stroke="#3a80d0" stroke-width="1.6"/><path d="M623 63h6" stroke="#3a80d0" stroke-width="1.6"/><path d="M630 67l5 5" stroke="#d0a020" stroke-width="2.6"/><rect x="648" y="58" width="7.5" height="7" fill="#3a9a3a"/><rect x="656.5" y="58" width="7.5" height="7" fill="#2a6ad0"/><rect x="648" y="66" width="7.5" height="7" fill="#2a6ad0"/><rect x="656.5" y="66" width="7.5" height="7" fill="#3a9a3a"/><path d="M649.5 61.5h4.5M658 61.5h4.5M649.5 69.5h4.5M658 69.5h4.5" stroke="#fff"/><path d="M684 58v14h12" stroke="#444" fill="none" stroke-width="1.2"/><path d="M689 61v7l5-3.5z" fill="#2a2"/><path d="M712 58v14h12" stroke="#444" fill="none" stroke-width="1.2"/><path d="M717.5 59v11" stroke="#2a6ad0" stroke-width="1.5"/><path d="M724 64.5h-5M721 62.5l-2.5 2 2.5 2" stroke="#c03020" fill="none" stroke-width="1.2"/><path d="M745.5 57.5h7l3 3v10h-10z" fill="#fff" stroke="#666"/><text x="747" y="66" font-size="7" fill="#333" font-style="italic">f</text><path d="M751.5 65h3v3h3v3h-3v3h-3v-3h-3v-3h3z" fill="#2fb52f" stroke="#1a7a1a" stroke-width="0.8"/><path d="M765 64h5l-2.5 3z" fill="#000"/><circle cx="789" cy="65" r="7.5" fill="#2a78d8"/><circle cx="789" cy="65" r="5.3" fill="#f8f8f8"/><path d="M789 61.5v3.5h3" stroke="#333" fill="none"/><path d="M802 64h5l-2.5 3z" fill="#000"/><rect x="818.5" y="58.5" width="15" height="13" fill="#fff" stroke="#2e6cc0" stroke-width="1.2"/><path d="M819 60.5h14" stroke="#6aa0e0" stroke-width="2"/><path d="M820 65l3-1 3 1 3-1 3 .5" stroke="#c03020" fill="none" stroke-width="0.9"/><path d="M820 69l3-1.5 3 1.5 3-1.5 3 1" stroke="#2a9a2a" fill="none" stroke-width="0.9"/><path d="M839 64h5l-2.5 3z" fill="#000"/></g><g transform="translate(0,2)"><path d="M24.5 85v13l3-3 2.5 5 1.5-.8-2.3-4.7h4.3z" fill="#333"/><path d="M56.5 84v7M56.5 92v7M49 91.5h7M57 91.5h7" stroke="#444" stroke-width="1.2"/><path d="M90.5 86v11" stroke="#444" stroke-width="1.2"/><path d="M113 91.5h12" stroke="#444" stroke-width="1.2"/><path d="M141 97l12-11" stroke="#555" stroke-width="1.2"/><path d="M167 97l12-11M169 95l12-11M171 98l9-9M168 92l4 4M172 89l4 4M175 86l3 3" stroke="#555" stroke-width="0.9"/><text x="178" y="101" font-size="6" font-weight="bold" fill="#444">E</text><path d="M196 86.5h13M196 89.5h13M196 92.5h13M196 95.5h13" stroke="#777" stroke-dasharray="1 1"/><text x="205" y="102" font-size="6" font-weight="bold" fill="#444">F</text><text x="226.5" y="97" font-size="11" font-weight="bold" fill="#555">A</text><rect x="252.5" y="85.5" width="12" height="11" fill="none" stroke="#777" stroke-dasharray="1 1"/><text x="254.5" y="95.5" font-size="10" font-weight="bold" fill="#555">T</text><path d="M280 88l4-3 4 3-4 3zM286 93l4-3 4 3-4 3z" fill="#333"/><path d="M299 91h5l-2.5 3z" fill="#000"/></g><text x="325.5" y="97" font-size="10.3" fill="#505050">M1</text><text x="353.6" y="97" font-size="10.3" fill="#505050">M5</text><text x="379.6" y="97" font-size="10.3" fill="#505050">M15</text><text x="407" y="97" font-size="10.3" fill="#505050">M30</text><text x="438.5" y="97" font-size="10.3" fill="#505050">H1</text><text x="465.6" y="97" font-size="10.3" fill="#505050">H4</text><text x="494" y="97" font-size="10.3" fill="#505050">D1</text><text x="521.8" y="97" font-size="10.3" fill="#505050">W1</text><text x="548.4" y="97" font-size="10.3" fill="#505050">MN</text><rect x="8" y="693" width="1353" height="1" fill="#d8d8d8"/><rect x="8" y="694" width="1353" height="2" fill="#000"/><rect x="8" y="696" width="1353" height="19" fill="#f0f0f0"/><rect x="8" y="107" width="2" height="607" fill="#a0a0a0"/><rect x="1360" y="107" width="1" height="607" fill="#d4d4d4"/><path d="M356.5 695V713.5H440.5V695" fill="#fff" stroke="#000" stroke-width="1.5"/><rect x="357" y="694" width="83" height="3" fill="#fff"/><text x="21" y="708" font-size="10" fill="#66668a">EURUSDh,H1</text><text x="106" y="708" font-size="10" fill="#66668a">USDCHFh,M15</text><text x="198" y="708" font-size="10" fill="#66668a">GBPUSDh,H1</text><text x="282" y="708" font-size="10" fill="#66668a">USDJPYh,H1</text><text x="451.8" y="708" font-size="10" fill="#66668a">GBPCHFh,Daily</text><text x="545.8" y="708" font-size="10" fill="#66668a">AUDUSDh,M15</text><text x="638" y="708" font-size="10" fill="#66668a">GBPJPYh,Daily</text><text x="730.7" y="708" font-size="10" fill="#66668a">EURGBPh,H1</text><text x="814.7" y="708" font-size="10" fill="#66668a">USDCADh,H4</text><text x="901.4" y="708" font-size="10" fill="#66668a">XAUUSDh,H1</text><text x="985.5" y="708" font-size="10" fill="#66668a">USDCADh,M15</text><text x="1077" y="708" font-size="10" fill="#66668a">NZDUSDh,H4</text><text x="1162" y="708" font-size="10" fill="#66668a">AUDNZDh,Weekly</text><text x="366.4" y="708" font-size="10" fill="#000">EURJPYh,H1</text><rect x="95" y="698" width="1" height="14" fill="#606060"/><rect x="188" y="698" width="1" height="14" fill="#606060"/><rect x="271" y="698" width="1" height="14" fill="#606060"/><rect x="536" y="698" width="1" height="14" fill="#606060"/><rect x="628" y="698" width="1" height="14" fill="#606060"/><rect x="720" y="698" width="1" height="14" fill="#606060"/><rect x="804" y="698" width="1" height="14" fill="#606060"/><rect x="892" y="698" width="1" height="14" fill="#606060"/><rect x="978" y="698" width="1" height="14" fill="#606060"/><rect x="1069" y="698" width="1" height="14" fill="#606060"/><rect x="1153" y="698" width="1" height="14" fill="#606060"/><rect x="1260" y="698" width="1" height="14" fill="#606060"/><path d="M1336 702v6l-3.5-3z" fill="#909090"/><path d="M1350 702v6l3.5-3z" fill="#909090"/><rect x="8" y="715" width="1353" height="1" fill="#fff"/><text x="10.5" y="729.8" font-size="11.4" fill="#000">Для справки, нажмите F1</text><text x="641" y="729.8" font-size="11" fill="#000">Default</text><text x="757.5" y="729.8" font-size="11" fill="#000">2015.01.09 11:00</text><text x="859.7" y="729.8" font-size="11" fill="#000">O: 140.832</text><text x="930" y="729.8" font-size="11" fill="#000">H: 140.990</text><text x="1001" y="729.8" font-size="11" fill="#000">L: 140.806</text><text x="1069" y="729.8" font-size="11" fill="#000">C: 140.844</text><text x="1139" y="729.8" font-size="11" fill="#000">V: 5876</text><text x="1262" y="729.8" font-size="11" fill="#000">1937/1 kb</text><rect x="635" y="718" width="1" height="17" fill="#a0a0a0"/><rect x="752" y="718" width="1" height="17" fill="#a0a0a0"/><rect x="853" y="718" width="1" height="17" fill="#a0a0a0"/><rect x="924" y="718" width="1" height="17" fill="#a0a0a0"/><rect x="995" y="718" width="1" height="17" fill="#a0a0a0"/><rect x="1064" y="718" width="1" height="17" fill="#a0a0a0"/><rect x="1133" y="718" width="1" height="17" fill="#a0a0a0"/><rect x="1199" y="718" width="1" height="17" fill="#a0a0a0"/><rect x="1205" y="721" width="2" height="8" fill="#6a8a10"/><rect x="1205" y="729" width="2" height="4" fill="#6a8a10" opacity="0.9"/><rect x="1208" y="721" width="2" height="8" fill="#6a8a10"/><rect x="1208" y="729" width="2" height="4" fill="#6a8a10" opacity="0.9"/><rect x="1211" y="721" width="2" height="8" fill="#6a8a10"/><rect x="1211" y="729" width="2" height="4" fill="#6a8a10" opacity="0.9"/><rect x="1214" y="721" width="2" height="8" fill="#6a8a10"/><rect x="1214" y="729" width="2" height="4" fill="#6a8a10" opacity="0.9"/><rect x="1217" y="721" width="2" height="8" fill="#6a8a10"/><rect x="1217" y="729" width="2" height="4" fill="#6a8a10" opacity="0.9"/><rect x="1220" y="721" width="2" height="8" fill="#6a8a10"/><rect x="1220" y="724" width="2" height="9" fill="#a02018" opacity="0.9"/><rect x="1223" y="721" width="2" height="8" fill="#6a8a10"/><rect x="1223" y="724" width="2" height="9" fill="#a02018" opacity="0.9"/><rect x="1226" y="721" width="2" height="8" fill="#6a8a10"/><rect x="1226" y="724" width="2" height="9" fill="#a02018" opacity="0.9"/><path d="M1347 736L1361 722M1351 736L1361 726M1355 736L1361 730" stroke="#888" stroke-width="1.2"/><rect x="0" y="728" width="1366" height="16" fill="#1a8088" fill-opacity="0.46"/><rect x="0" y="728" width="1366" height="1" fill="#1a6a70" fill-opacity="0.3"/><rect x="0" y="736" width="1366" height="8" fill="#55b7bc"/><rect x="1366" y="728" width="3" height="16" fill="#ffffff"/><path d="M12 737.5L24 736V744H12Z M25 735.8L38 734V744H25Z" fill="#fff"/><rect x="66" y="734" width="30" height="10" fill="#0a8a2a"/><path d="M73 744v-6h16v6" fill="#fff"/><circle cx="81" cy="738" r="3.5" fill="none" stroke="#fff" stroke-width="1.6"/><path d="M128 737l18-3v10h-18z" fill="#2b5797"/><rect x="142" y="736" width="16" height="8" fill="#fff"/><path d="M145 739h10M145 741.5h10" stroke="#2b5797"/><rect x="176.5" y="728.5" width="57" height="16" fill="#ffffff" fill-opacity="0.16" stroke="#c8e8ea" stroke-opacity="0.6"/><rect x="423.5" y="728.5" width="57" height="16" fill="#ffffff" fill-opacity="0.16" stroke="#c8e8ea" stroke-opacity="0.6"/><rect x="485.5" y="728.5" width="57" height="16" fill="#ffffff" fill-opacity="0.28" stroke="#c8e8ea" stroke-opacity="0.6"/><rect x="548.5" y="728.5" width="57" height="16" fill="#ffffff" fill-opacity="0.12" stroke="#c8e8ea" stroke-opacity="0.6"/><rect x="610.5" y="728.5" width="57" height="16" fill="#ffffff" fill-opacity="0.12" stroke="#c8e8ea" stroke-opacity="0.6"/><circle cx="205" cy="746" r="13" fill="#dd3c2c"/><path d="M192 746a13 13 0 0 1 6 -11l7 11z" fill="#f4c20d"/><circle cx="205" cy="746" r="6" fill="#4a8ae0" stroke="#fff" stroke-width="2"/><path d="M250 744v-9l4-3h16l8 6v6z" fill="#a8c8f0"/><circle cx="264" cy="744" r="5" fill="#fff"/><path d="M313 744v-11h20l8 8v3z" fill="#fff"/><text x="320" y="746" font-size="12" fill="#e02020" font-weight="bold">Я</text><path d="M378 734l26 10M404 734l-26 10" stroke="#e02020" stroke-width="5"/><circle cx="391" cy="746" r="6" fill="#fff"/><circle cx="452" cy="746" r="14" fill="#1aa0e8"/><text x="446" y="748" font-size="14" font-weight="bold" fill="#fff">S</text><circle cx="513" cy="748" r="14" fill="#a82018"/><ellipse cx="509" cy="740" rx="6" ry="3" fill="#d05040"/><rect x="562" y="734" width="26" height="10" fill="#3a7ac8"/><rect x="564" y="738" width="22" height="6" fill="#fff"/><circle cx="566" cy="742" r="3" fill="#e08020"/><ellipse cx="638" cy="747" rx="14" ry="12" fill="#f0a050"/><ellipse cx="638" cy="742" rx="10" ry="5" fill="#f8d8b0"/><rect x="1306" y="737" width="26" height="7" fill="#55b7bc"/><text x="1310" y="744.5" font-size="11.5" fill="#fff">9:41</text><path d="M1158 744l3-4 3 4z" fill="#fff"/><rect x="1175" y="738" width="15" height="6" fill="#fff"/><rect x="1200" y="737" width="14" height="7" fill="#fff"/><rect x="1235" y="741" width="3" height="3" fill="#fff"/>
</svg>
</body></html>
